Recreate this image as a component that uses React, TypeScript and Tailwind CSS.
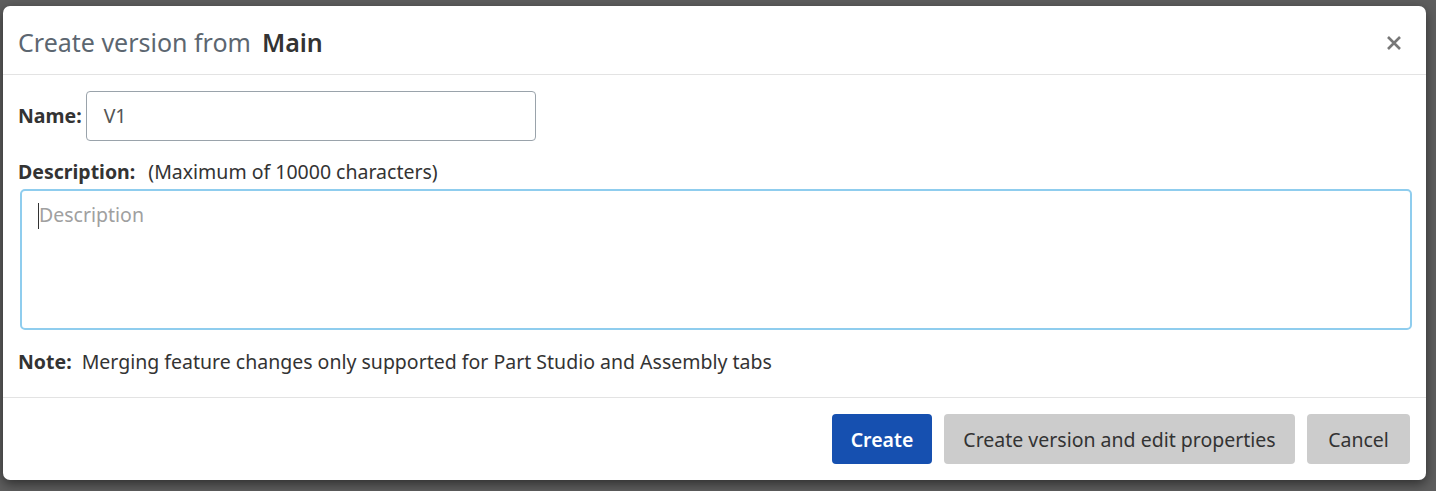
import React from 'react';

const App: React.FC = () => {
    return (
        <div className="w-[1436px] h-[491px] bg-[#5e5e5e] pt-[6px] pl-[3px] font-['Noto_Sans',sans-serif]">
            <div className="w-[1423px] h-[474px] bg-white rounded-[7px] shadow-[0_4px_12px_rgba(0,0,0,0.5)] flex flex-col">
                <div className="h-[69px] flex items-center justify-between px-[15px] border-b border-[#e3e3e3]">
                    <div className="text-[25px] text-[#5c6670] flex items-baseline gap-[11px] mt-[5px]">
                        <span>Create version from</span>
                        <span className="font-semibold text-[#333333]">Main</span>
                    </div>
                    <svg width="16" height="16" viewBox="0 0 16 16" className="mr-[9px] mt-[6px]">
                        <path d="M2 2 L14 14 M14 2 L2 14" stroke="#777" strokeWidth="2.6" />
                    </svg>
                </div>
                <div className="flex flex-col px-[15px] pt-[16px]">
                    <div className="flex items-center gap-[4px]">
                        <span className="text-[19.5px] font-bold text-[#333]">Name:</span>
                        <div className="w-[450px] h-[50px] border border-[#9aa3ab] rounded-[4px] flex items-center px-[17px] text-[19.5px] text-[#555]">
                            V1
                        </div>
                    </div>
                    <div className="mt-[17px] text-[19.5px] text-[#333] flex gap-[13px] leading-[28px]">
                        <span className="font-bold">Description:</span>
                        <span>(Maximum of 10000 characters)</span>
                    </div>
                    <div className="mt-[3px] ml-[2px] w-[1392px] h-[141px] border-2 border-[#8fcdee] rounded-[5px] px-[16px] pt-[9px] text-[19.5px] text-[#a0a0a0] flex">
                        <span className="w-[1px] h-[26px] bg-[#333] mt-[3px]" />
                        <span>Description</span>
                    </div>
                    <div className="mt-[17px] text-[19.5px] text-[#333] flex gap-[10px]">
                        <span className="font-bold">Note:</span>
                        <span>Merging feature changes only supported for Part Studio and Assembly tabs</span>
                    </div>
                </div>
                <div className="mt-[21px] border-t border-[#e3e3e3] flex justify-end gap-[12px] px-[16px] pt-[16px]">
                    <button className="h-[50px] w-[100px] rounded-[4px] bg-[#1650b0] text-white text-[19.5px] font-semibold">Create</button>
                    <button className="h-[50px] w-[351px] rounded-[4px] bg-[#cccccc] text-[#333] text-[19.5px]">Create version and edit properties</button>
                    <button className="h-[50px] w-[103px] rounded-[4px] bg-[#cccccc] text-[#333] text-[19.5px]">Cancel</button>
                </div>
            </div>
        </div>
    );
};

export default App;
